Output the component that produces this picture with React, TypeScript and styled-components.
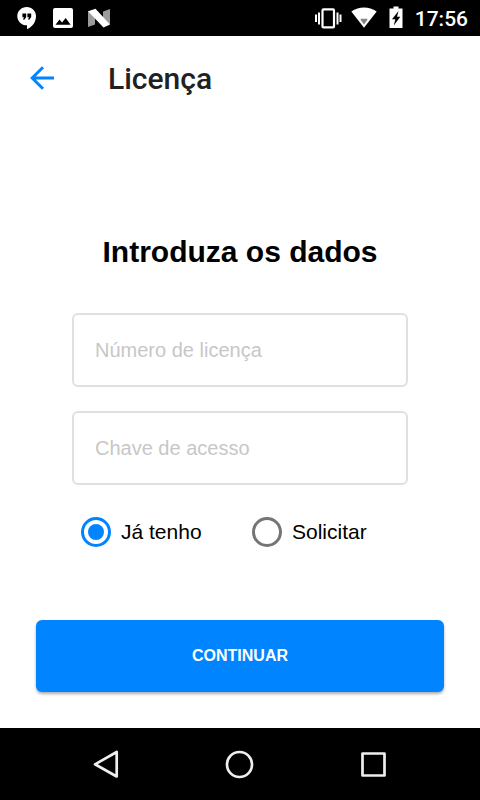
import React, { useState } from 'react';
import styled, { createGlobalStyle } from 'styled-components';

const GlobalStyle = createGlobalStyle`
  *, *::before, *::after { box-sizing: border-box; }
  body {
    margin: 0;
    background: #fff;
    font-family: "Liberation Sans", Arial, sans-serif;
  }
`;

const Screen = styled.div`
  display: flex;
  flex-direction: column;
  min-height: 100vh;
`;

const StatusBar = styled.div`
  display: flex;
  justify-content: space-between;
  align-items: center;
  height: 36px;
  padding: 0 12px 0 15px;
  background: #000;
  color: #fff;
`;

const StatusGroup = styled.div<{ $gap: number }>`
  display: flex;
  align-items: center;
  gap: ${({ $gap }) => $gap}px;

  svg { display: block; }
`;

const Clock = styled.time`
  font: 500 21px/24px Roboto, sans-serif;
  padding-top: 2px;
`;

const AppBar = styled.header`
  display: flex;
  align-items: center;
  gap: 48px;
  height: 84px;
  padding: 0 24px;
`;

const IconButton = styled.button`
  display: flex;
  align-items: center;
  justify-content: center;
  width: 36px;
  height: 36px;
  padding: 0;
  border: 0;
  background: none;
  cursor: pointer;
`;

const Title = styled.h1`
  margin: 0;
  padding-top: 2px;
  color: #212121;
  font: 500 30px/36px Roboto, sans-serif;
`;

const Form = styled.form`
  display: flex;
  flex: 1;
  flex-direction: column;
  padding: 112px 36px 36px;
`;

const Heading = styled.h2`
  margin: 0 0 41px;
  color: #000;
  font-size: 30px;
  font-weight: 700;
  line-height: 40px;
  text-align: center;
`;

const Fields = styled.div`
  display: flex;
  flex-direction: column;
  gap: 24px;
  padding: 0 36px;
`;

const TextField = styled.input`
  width: 100%;
  height: 74px;
  padding: 0 21px;
  border: 2px solid #e0e0e0;
  border-radius: 6px;
  background: #fff;
  color: #000;
  font: 400 20px/24px "Liberation Sans", Arial, sans-serif;

  &::placeholder { color: #c7c7c7; opacity: 1; }
`;

const Choices = styled.div`
  display: grid;
  grid-template-columns: 1fr 1fr;
  column-gap: 15px;
  margin: 32px 36px 0;
  padding-left: 9px;
`;

const Choice = styled.label`
  display: flex;
  align-items: center;
  gap: 10px;
  color: #000;
  font-size: 21px;
  line-height: 30px;
  white-space: nowrap;
  cursor: pointer;
`;

const Radio = styled.input`
  appearance: none;
  flex: none;
  display: grid;
  place-items: center;
  width: 30px;
  height: 30px;
  margin: 0;
  border: 3px solid #757575;
  border-radius: 50%;

  &:checked { border-color: #0084ff; }
  &:checked::before {
    content: "";
    width: 16px;
    height: 16px;
    border-radius: 50%;
    background: #0084ff;
  }
`;

const Submit = styled.button`
  width: 100%;
  height: 72px;
  margin-top: auto;
  padding: 0;
  border: 0;
  border-radius: 6px;
  background: #0084ff;
  box-shadow: 0 2px 3px rgba(0, 0, 0, 0.32);
  color: #fff;
  font: 700 16px/24px "Liberation Sans", Arial, sans-serif;
  text-transform: uppercase;
  cursor: pointer;
`;

const NavBar = styled.nav`
  display: flex;
  align-items: center;
  justify-content: center;
  gap: 98px;
  height: 72px;
  background: #000;
`;

const HangoutsIcon = () => (
  <svg width="24" height="24" viewBox="0 0 24 24">
    <path
      fill="#fff"
      d="M11.7 1C6.5 1 2.300 5.100 2.300 10.200C2.300 15.300 6.500 19.300 11.700 19.300H12V23.300C17.500 20.700 21 15.900 21 10.200C21 5.100 16.900 1 11.700 1Z"
    />
    <path fill="#000" d="M7.400 7.400H11.200V11L9.600 13.600H7.900L9 11.200H7.400ZM12.400 7.400H16.200V11L14.600 13.600H12.900L14 11.200H12.400Z" />
  </svg>
);

const PhotoIcon = () => (
  <svg width="24" height="24" viewBox="0 0 24 24">
    <rect x="2" y="2" width="20" height="20" rx="2" fill="#fff" />
    <path fill="#000" d="M4.500 18.800L8.500 13.500L11 16.500L14.700 12L19.600 18.800Z" />
  </svg>
);

const NougatIcon = () => (
  <svg width="24" height="24" viewBox="0 0 24 24">
    <path fill="#9a9a9a" d="M1 5L8 11V18.500L1 21ZM16 5.500L23 3V18.500L16 14Z" />
    <path fill="#fff" d="M1 5.300L8.500 2.700L23 18.500L16.500 21.500Z" />
  </svg>
);

const VibrateIcon = () => (
  <svg width="28" height="24" viewBox="0 0 28 24">
    <rect x="8.500" y="3.400" width="11.500" height="18" rx="1" fill="none" stroke="#fff" strokeWidth="2.200" />
    <path fill="none" stroke="#fff" strokeWidth="2" d="M2 8.500V16M5 6.500V18.500M23.500 6.500V18.500M26.500 8.500V16" />
  </svg>
);

const WifiIcon = () => (
  <svg width="26" height="24" viewBox="0 0 26 24">
    <path fill="#fff" d="M0.300 5.500C8 .2 18 .2 25.700 5.500L13 21.700Z" />
    <path fill="#858585" d="M9.700 12.800H16.300V14L13 18.500L9.700 14Z" />
  </svg>
);

const BatteryIcon = () => (
  <svg width="14" height="24" viewBox="0 0 14 24">
    <path fill="#fff" d="M4.500 0.500H9.500V2.500H13.500V22H.5V2.500H4.500Z" />
    <path fill="#000" d="M9.500 5L3 13.300H6.300L4.800 19.500L11.300 10.800H8Z" />
  </svg>
);

const BackArrow = () => (
  <svg width="28" height="28" viewBox="0 0 28 28" fill="none" stroke="#0084ff" strokeWidth="3">
    <path d="M26 14H4.500M15 3.200L4.200 14L15 24.800" />
  </svg>
);

const navIcon = { fill: 'none', stroke: '#eee', strokeWidth: 2.7, strokeLinejoin: 'round' as const };

export default function App() {
  const [choice, setChoice] = useState('tenho');

  return (
    <Screen>
      <GlobalStyle />
      <StatusBar>
        <StatusGroup $gap={12}>
          <HangoutsIcon />
          <PhotoIcon />
          <NougatIcon />
        </StatusGroup>
        <StatusGroup $gap={12}>
          <StatusGroup $gap={9}>
            <VibrateIcon />
            <WifiIcon />
          </StatusGroup>
          <BatteryIcon />
          <Clock dateTime="17:56">17:56</Clock>
        </StatusGroup>
      </StatusBar>
      <AppBar>
        <IconButton type="button" aria-label="Voltar"><BackArrow /></IconButton>
        <Title>Licença</Title>
      </AppBar>
      <Form onSubmit={(event) => event.preventDefault()}>
        <Heading>Introduza os dados</Heading>
        <Fields>
          <TextField aria-label="Número de licença" placeholder="Número de licença" />
          <TextField aria-label="Chave de acesso" placeholder="Chave de acesso" />
        </Fields>
        <Choices role="radiogroup" aria-label="Licença">
          <Choice>
            <Radio type="radio" name="licenca" checked={choice === 'tenho'} onChange={() => setChoice('tenho')} />
            Já tenho
          </Choice>
          <Choice>
            <Radio type="radio" name="licenca" checked={choice === 'solicitar'} onChange={() => setChoice('solicitar')} />
            Solicitar
          </Choice>
        </Choices>
        <Submit type="submit">Continuar</Submit>
      </Form>
      <NavBar>
        <IconButton type="button" aria-label="Retroceder">
          <svg width="36" height="36" viewBox="0 0 36 36" {...navIcon}>
            <path d="M28.700 6V30.500L7 18.300Z" />
          </svg>
        </IconButton>
        <IconButton type="button" aria-label="Início">
          <svg width="36" height="36" viewBox="0 0 36 36" {...navIcon}>
            <circle cx="17.500" cy="18.500" r="12.500" />
          </svg>
        </IconButton>
        <IconButton type="button" aria-label="Recentes">
          <svg width="36" height="36" viewBox="0 0 36 36" {...navIcon}>
            <rect x="6.500" y="7.500" width="22" height="22" />
          </svg>
        </IconButton>
      </NavBar>
    </Screen>
  );
}
